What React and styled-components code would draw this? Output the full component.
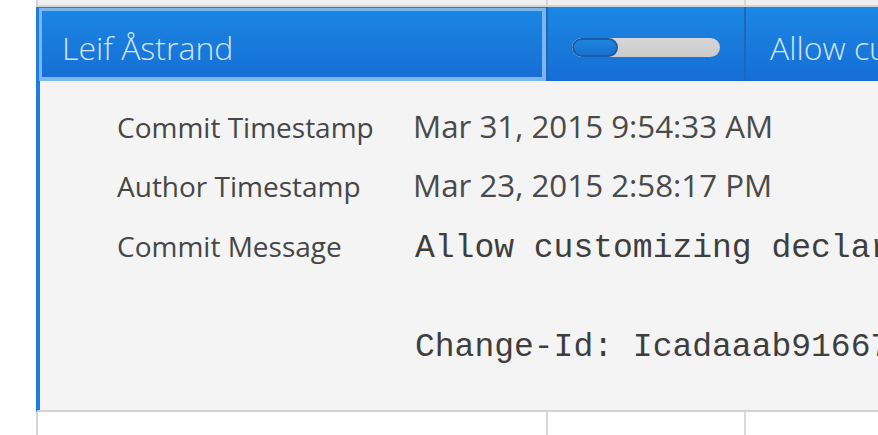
import React from "react";
import styled, { createGlobalStyle, css } from "styled-components";

const Global = createGlobalStyle`
  html, body { margin: 0; padding: 0; background: #ffffff; overflow: hidden; }
  body { font-family: "Open Sans", "Liberation Sans", sans-serif; -webkit-font-smoothing: antialiased; }
`;

const Page = styled.div`
  width: 878px;
  height: 435px;
  overflow: hidden;
  padding-left: 36px;
  box-sizing: border-box;
`;

const Grid = styled.div`
  width: 1400px;
  display: flex;
  flex-direction: column;
`;

const Row = styled.div`
  display: grid;
  grid-template-columns: 508px 198px 1fr;
  height: ${(p) => p.$height}px;
  border-left: 2px solid ${(p) => (p.$selected ? "#1b7fe0" : "#d4d4d4")};
  border-bottom: ${(p) => (p.$divider ? "2px solid #d4d4d4" : "none")};
  background: ${(p) =>
    p.$selected
      ? "linear-gradient(to bottom, #1b87e3 2%, #166ed5 98%)"
      : p.$stripe
      ? "#efefef"
      : "#ffffff"};
  color: ${(p) => (p.$selected ? "#d3e4f7" : "#474747")};
  overflow: hidden;
`;

const Cell = styled.div`
  display: flex;
  align-items: center;
  box-sizing: border-box;
  padding: 7px 24px 0 24px;
  font-size: 32px;
  font-weight: 300;
  white-space: nowrap;
  overflow: hidden;
  border-left: ${(p) => (p.$first ? "none" : `2px solid ${p.$line}`)};
  ${(p) =>
    p.$focused &&
    css`
      box-shadow: inset 1px 1px 0 0 #1f7fe0, inset 0 0 0 4px #7db5ec;
    `}
`;

const Track = styled.div`
  width: 148px;
  height: 19px;
  border-radius: 10px;
  background: linear-gradient(to bottom, #d6d6d6, #cbcbcb);
  display: flex;
  overflow: hidden;
`;

const Indicator = styled.div`
  height: 100%;
  box-sizing: border-box;
  border: 2px solid #1a5da6;
  border-radius: 10px;
  background: linear-gradient(to bottom, #1e86e0, #1a6fcf);
`;

const Details = styled.div`
  background: #f4f4f4;
  border-left: 2px solid #197de1;
  box-shadow: inset 2px 0 0 #197de1;
  border-bottom: 2px solid #d4d4d4;
  padding: 16px 0 46px 79px;
  color: #464646;
`;

const Form = styled.div`
  display: grid;
  grid-template-columns: 296px 1fr;
  align-items: baseline;
`;

const Label = styled.div`
  font-size: 28px;
  line-height: 58px;
  font-weight: 400;
  white-space: nowrap;
`;

const Value = styled.div`
  font-size: 31.3px;
  line-height: 58px;
  font-weight: 400;
  white-space: nowrap;
  color: #4a4a4a;
`;

const Message = styled.pre`
  margin: 0;
  padding: 17px 0 0 2px;
  font-family: "Liberation Mono", "Courier New", monospace;
  font-size: 33px;
  line-height: 33px;
  color: #3e3e3e;
  white-space: pre;
`;

export default function App() {
  const message =
    "Allow customizing declarative format for custom components\n" +
    "                        the design is now configurable\n" +
    "\n" +
    "Change-Id: Icadaaab916671f2b8d1e0a2c7b3e6f45d9c01a2b";
  return (
    <Page>
      <Global />
      <Grid>
        <Row $height={5} $stripe $divider>
          <Cell $first />
          <Cell $line="#d6d6d6" />
          <Cell $line="#d6d6d6" />
        </Row>
        <Row $height={74} $selected>
          <Cell $first $focused>Leif Åstrand</Cell>
          <Cell $line="#1d66b8">
            <Track>
              <Indicator style={{ width: "46px" }} />
            </Track>
          </Cell>
          <Cell $line="#1d66b8">Allow customizing declarative format</Cell>
        </Row>
        <Details>
          <Form>
            <Label>Commit Timestamp</Label>
            <Value>Mar 31, 2015 9:54:33 AM</Value>
            <Label>Author Timestamp</Label>
            <Value>Mar 23, 2015 2:58:17 PM</Value>
            <Label>Commit Message</Label>
            <Message>{message}</Message>
          </Form>
        </Details>
        <Row $height={40}>
          <Cell $first />
          <Cell $line="#d8d8d8" />
          <Cell $line="#d8d8d8" />
        </Row>
      </Grid>
    </Page>
  );
}
